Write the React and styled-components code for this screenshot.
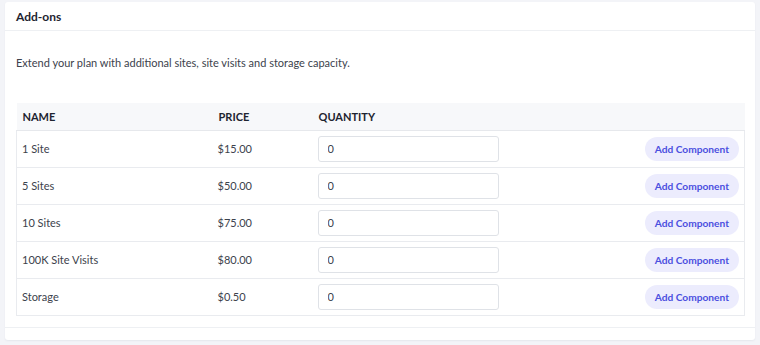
import styled, { createGlobalStyle } from "styled-components";

const GlobalStyle = createGlobalStyle`
  body {
    margin: 0;
    background: #f3f4f8;
    font-family: Lato, "Noto Sans", sans-serif;
    color: #3a3f48;
  }
`;

const Page = styled.div`
  padding: 2px 5px 5px 5px;
`;

const Card = styled.section`
  background: #ffffff;
  border-radius: 3px;
  box-shadow: 0 1px 2px rgba(20, 30, 60, 0.06);
  padding-bottom: 12px;
`;

const CardHeader = styled.header`
  height: 29px;
  display: flex;
  align-items: center;
  padding: 1px 11px 0 11px;
  border-bottom: 1px solid #eef0f3;
  font-size: 12px;
  font-weight: 700;
  color: #1e2430;
  box-sizing: border-box;
`;

const CardBody = styled.div`
  padding: 24px 10px 11px 11px;
  border-bottom: 1px solid #eef0f3;
`;

const Lead = styled.p`
  margin: 0 0 32px 0;
  font-size: 11px;
  line-height: 16px;
  color: #3c424c;
`;

const Table = styled.table`
  width: 729px;
  table-layout: fixed;
  border-collapse: collapse;
  font-size: 11px;
`;

const HeadRow = styled.tr`
  background: #f7f8fa;
  height: 27px;
  border-bottom: 1px solid #e6e8ec;
`;

const Th = styled.th`
  box-sizing: border-box;
  text-align: left;
  font-weight: 700;
  font-size: 11px;
  color: #1e2430;
  padding: 1px 0 0 6px;
  width: ${(p) => p.$w || "auto"};
`;

const Row = styled.tr`
  height: 37px;
  border-bottom: 1px solid #e9ebef;
  border-left: 1px solid #e9ebef;
  border-right: 1px solid #e9ebef;
`;

const Td = styled.td`
  padding: 0 ${(p) => (p.$right ? "5px" : "0")} 0 5px;
  text-align: ${(p) => (p.$right ? "right" : "left")};
  color: #3c424c;
`;

const QtyInput = styled.input`
  box-sizing: border-box;
  width: 181px;
  height: 26px;
  border: 1px solid #dfe2e7;
  border-radius: 3px;
  padding: 0 9px;
  font-family: inherit;
  font-size: 11px;
  color: #3c424c;
  outline: none;
`;

const AddButton = styled.button`
  height: 24px;
  padding: 0 10px;
  border: none;
  border-radius: 12px;
  background: #ececfd;
  color: #4b4fe0;
  font-family: inherit;
  font-size: 10.2px;
  font-weight: 700;
  cursor: pointer;
`;

const addons = [
  { name: "1 Site", price: "$15.00" },
  { name: "5 Sites", price: "$50.00" },
  { name: "10 Sites", price: "$75.00" },
  { name: "100K Site Visits", price: "$80.00" },
  { name: "Storage", price: "$0.50" },
];

export default function App() {
  return (
    <>
      <GlobalStyle />
      <Page>
        <Card>
          <CardHeader>Add-ons</CardHeader>
          <CardBody>
            <Lead>Extend your plan with additional sites, site visits and storage capacity.</Lead>
            <Table>
              <thead>
                <HeadRow>
                  <Th $w="196px">NAME</Th>
                  <Th $w="100px">PRICE</Th>
                  <Th $w="200px">QUANTITY</Th>
                  <Th />
                </HeadRow>
              </thead>
              <tbody>
                {addons.map((a) => (
                  <Row key={a.name}>
                    <Td>{a.name}</Td>
                    <Td>{a.price}</Td>
                    <Td>
                      <QtyInput defaultValue="0" />
                    </Td>
                    <Td $right>
                      <AddButton>Add Component</AddButton>
                    </Td>
                  </Row>
                ))}
              </tbody>
            </Table>
          </CardBody>
        </Card>
      </Page>
    </>
  );
}
